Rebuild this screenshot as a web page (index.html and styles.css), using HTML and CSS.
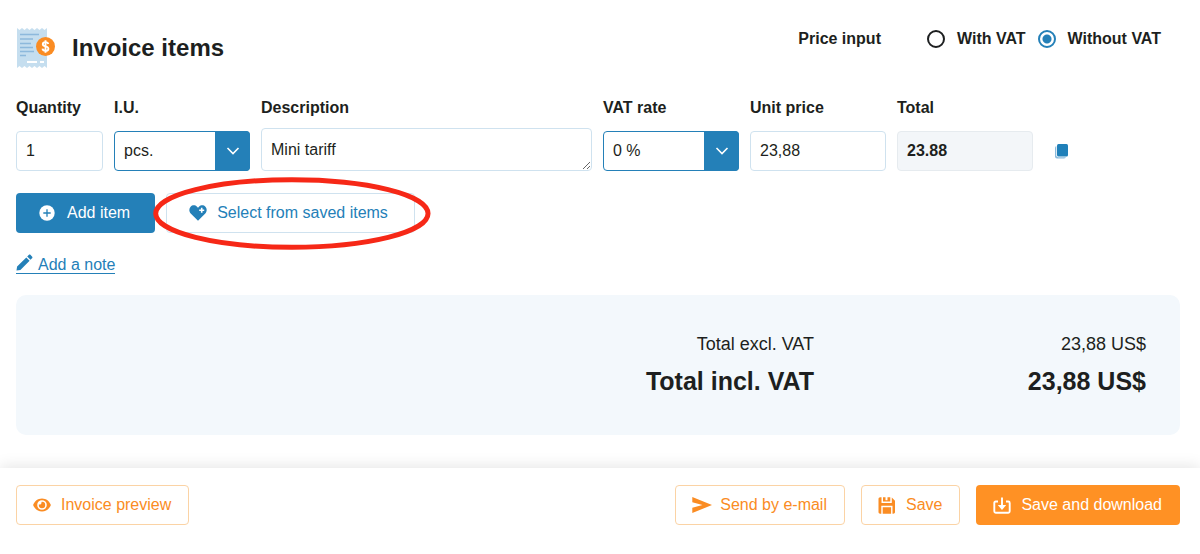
FILE: index.html
```html
<!DOCTYPE html>
<html lang="en">
<head>
<meta charset="utf-8">
<meta name="viewport" content="width=device-width, initial-scale=1">
<title>Invoice items</title>
<link rel="stylesheet" href="styles.css">
</head>
<body>
<form class="page">
  <main class="content">
    <header class="head">
      <svg class="head-icon" width="40" height="42" viewBox="0 0 40 42" aria-hidden="true">
        <path fill="#c5deef" d="M1 1l2.500 2 2.500-2 2.500 2 2.500-2 2.500 2 2.500-2 2.500 2 2.500-2 2.500 2 2.500-2 2.500 2 2.500-2v40l-2.500-2-2.500 2-2.500-2-2.500 2-2.500-2-2.500 2-2.500-2-2.500 2-2.500-2-2.500 2-2.500-2-2.500 2z"/>
        <path stroke="#8db9dc" stroke-width="1.600" d="M4 7.500h19M4 12h13M4 16.500h11M4 20.500h13M4 24.500h14M4 28.500h6"/>
        <path stroke="#fff" stroke-width="2" d="M11 35h10M24 35h4"/>
        <circle cx="29.500" cy="19.500" r="9.500" fill="#fa8c23"/>
        <path fill="none" stroke="#fff" stroke-width="1.900" d="M32.300 17c-.3-1.300-1.400-1.900-2.800-1.900-1.600 0-2.700.8-2.700 2.100 0 3 5.600 1.400 5.600 4.500 0 1.400-1.200 2.200-2.900 2.200s-2.800-.8-3-2.200M29.500 13.200v12.600"/>
      </svg>
      <h1 class="title">Invoice items</h1>
      <div class="price-input" role="radiogroup" aria-labelledby="price-label">
        <span class="price-label" id="price-label">Price input</span>
        <label class="radio"><input type="radio" name="vat">With VAT</label>
        <label class="radio"><input type="radio" name="vat" checked>Without VAT</label>
      </div>
    </header>

    <div class="item-row">
      <div class="field">
        <label class="label" for="qty">Quantity</label>
        <input class="input" id="qty" type="text" value="1">
      </div>
      <div class="field">
        <label class="label" for="unit">I.U.</label>
        <div class="select-box">
          <select class="select" id="unit"><option>pcs.</option></select>
          <span class="select-arrow"><svg width="14" height="8" viewBox="0 0 14 8" aria-hidden="true"><path d="M1.500 1L7 6.500 12.500 1"/></svg></span>
        </div>
      </div>
      <div class="field">
        <label class="label" for="desc">Description</label>
        <textarea class="input textarea" id="desc" rows="1">Mini tariff</textarea>
      </div>
      <div class="field">
        <label class="label" for="rate">VAT rate</label>
        <div class="select-box">
          <select class="select" id="rate"><option>0 %</option></select>
          <span class="select-arrow"><svg width="14" height="8" viewBox="0 0 14 8" aria-hidden="true"><path d="M1.500 1L7 6.500 12.500 1"/></svg></span>
        </div>
      </div>
      <div class="field">
        <label class="label" for="price">Unit price</label>
        <input class="input" id="price" type="text" value="23,88">
      </div>
      <div class="field">
        <label class="label" for="total">Total</label>
        <input class="input input-total" id="total" type="text" value="23.88" readonly>
      </div>
      <button class="copy" type="button" aria-label="Duplicate item">
        <svg width="14" height="16" viewBox="0 0 14 16" aria-hidden="true"><rect x="0" y="3" width="11" height="12.500" rx="2" fill="#8abadb"/><rect x="1.300" y=".5" width="12.200" height="13.700" rx="2" fill="#fff"/><rect x="2" y="1" width="11" height="12.500" rx="1.500" fill="#2080b9"/></svg>
      </button>
    </div>

    <div class="actions">
      <button class="btn btn-blue" type="button">
        <svg width="16" height="16" viewBox="0 0 16 16" aria-hidden="true"><circle cx="8" cy="8" r="7.700" fill="#fff"/><path stroke="#2480b8" stroke-width="1.300" d="M8 4.300v7.400M4.300 8h7.400"/></svg>
        Add item
      </button>
      <div class="highlighted">
        <button class="btn btn-light" type="button">
          <svg width="18" height="16" viewBox="0 0 18 16" aria-hidden="true"><path fill="#2480b8" d="M9 15.700L1.700 8.400C-.1 6.500-.1 3.500 1.600 1.700 3.300-.1 6.200-.1 8 1.700l1 1 1-1c1.800-1.800 4.700-1.800 6.400 0 1.700 1.800 1.700 4.800-.1 6.700z"/><path stroke="#fff" stroke-width="1.600" d="M12.700 2.800v5M10.200 5.300h5"/></svg>
          Select from saved items
        </button>
        <svg class="ring" viewBox="0 0 278 73" preserveAspectRatio="none" aria-hidden="true"><ellipse cx="139" cy="36.500" rx="136.300" ry="33.800"/></svg>
      </div>
    </div>

    <a class="note" href="#note"><svg width="17" height="17" viewBox="0 0 17 17" aria-hidden="true"><path fill="#2480b8" d="M.5 16.500l.6-3.900L10.300 3.400l3.300 3.300-9.200 9.200zM11.200 2.500l1.500-1.500c.6-.6 1.300-.6 1.900 0L16 2.400c.6.600.6 1.300 0 1.900l-1.500 1.500z"/></svg><span class="note-text">Add a note</span></a>

    <dl class="totals">
      <dt>Total excl. VAT</dt><dd>23,88 US$</dd>
      <dt class="grand">Total incl. VAT</dt><dd class="grand">23,88 US$</dd>
    </dl>
  </main>

  <footer class="footer">
    <button class="btn btn-outline preview" type="button">
      <svg width="18" height="14" viewBox="0 0 18 14" aria-hidden="true"><path fill="#fa8c23" fill-rule="evenodd" d="M9 .5c4.300 0 7.400 2.800 8.900 6.500C16.400 10.700 13.300 13.500 9 13.500S1.600 10.700.1 7C1.600 3.300 4.700.5 9 .5zM9 2.200a4.800 4.800 0 1 0 0 9.600 4.800 4.800 0 0 0 0-9.600z"/><path fill="#fa8c23" d="M9 3.800a3.200 3.200 0 1 1-3.200 3.200c0-.2 0-.4.100-.6A1.900 1.900 0 0 0 8.400 3.900z"/></svg>
      Invoice preview
    </button>
    <button class="btn btn-outline btn-send" type="button">
      <svg width="20" height="16" viewBox="0 0 20 16" aria-hidden="true"><path fill="#fa8c23" d="M.3 0L20 8 .3 16V10.700L10.500 8 .3 5.300z"/></svg>
      Send by e-mail
    </button>
    <button class="btn btn-outline" type="button">
      <svg width="18" height="17" viewBox="0 0 18 17" aria-hidden="true"><path fill="#fa8c23" d="M.5 2C.5 1 1.200.3 2.200.3H3.500V6h10.300V.6L17 3.800V15c0 1-.7 1.700-1.700 1.700h-.8V8.800H3.300v7.900H2.200C1.200 16.700.5 16 .5 15zM5 .3h2.500v3h2V.3h2.800v4.300H5zM4.700 10.200h8.400v6.500H4.700z"/></svg>
      Save
    </button>
    <button class="btn btn-orange" type="button">
      <svg width="18" height="17" viewBox="0 0 18 17" aria-hidden="true"><path fill="none" stroke="#fff" stroke-width="1.900" d="M5 4.500H2.700Q1.300 4.500 1.300 6v8.300q0 1.500 1.400 1.500h12.600q1.400 0 1.400-1.500V6q0-1.500-1.400-1.500H13M9 .5v9"/><path fill="#fff" d="M4.800 8L9 13l4.200-5z"/></svg>
      Save and download
    </button>
  </footer>
</form>
</body>
</html>
```
FILE: styles.css
```css
* { box-sizing: border-box; }

body {
  margin: 0;
  background: #fff;
  color: #1d1f20;
  font-family: "Liberation Sans", Arial, sans-serif;
  font-size: 16px;
  line-height: 20px;
}

button, input, select, textarea { font: inherit; color: inherit; }

svg { flex: none; }

.page {
  min-height: 100vh;
  display: flex;
  flex-direction: column;
}

.content {
  flex: 1;
  padding: 27px 20px 33px 16px;
}

.head {
  display: flex;
  align-items: flex-start;
}

.title {
  flex: 1;
  margin: 0 0 0 16px;
  font-size: 24px;
  line-height: 42px;
}

.price-input {
  display: flex;
  align-items: center;
  gap: 12px;
  margin: 2px 19px 0 0;
  font-weight: bold;
}

.price-label { margin-right: 34px; }

.radio {
  display: flex;
  align-items: center;
  gap: 12px;
}

.radio input {
  appearance: none;
  width: 18px;
  height: 18px;
  margin: 0;
  border: 2px solid #1d1f20;
  border-radius: 50%;
}

.radio input:checked {
  border-color: #2480b8;
  background: radial-gradient(circle, #2480b8 4px, #fff 5px);
}

.item-row {
  display: grid;
  grid-template-columns: 87px 136px minmax(120px, 1fr) repeat(4, 136px);
  column-gap: 11px;
  align-items: stretch;
  margin-top: 29px;
}

.field {
  display: flex;
  flex-direction: column;
  justify-content: space-between;
  min-width: 0;
}

.label { font-weight: bold; }

.input {
  width: 100%;
  height: 40px;
  padding: 0 9px;
  border: 1px solid #cfe2ef;
  border-radius: 4px;
  background: #fff;
}

.textarea {
  display: block;
  height: 43px;
  margin-top: 10px;
  padding: 11px 9px 0;
  overflow: hidden;
  resize: vertical;
}

.input-total {
  border-color: #e6ebef;
  background: #f3f6f9;
  font-weight: bold;
}

.select-box { display: grid; }

.select {
  grid-area: 1 / 1;
  appearance: none;
  width: 100%;
  height: 40px;
  padding: 0 44px 0 9px;
  border: 1px solid #2480b8;
  border-radius: 4px;
  background: #fff;
}

.select-arrow {
  grid-area: 1 / 1;
  justify-self: end;
  display: grid;
  place-items: center;
  width: 35px;
  border-radius: 0 4px 4px 0;
  background: #2480b8;
  pointer-events: none;
}

.select-arrow path {
  fill: none;
  stroke: #fff;
  stroke-width: 1.6;
}

.copy {
  align-self: end;
  justify-self: start;
  display: grid;
  place-items: center;
  height: 40px;
  margin-left: 11px;
  padding: 0;
  border: 0;
  background: none;
}

.actions {
  display: flex;
  gap: 11px;
  margin-top: 22px;
}

.btn {
  display: inline-flex;
  align-items: center;
  justify-content: center;
  gap: 10px;
  height: 40px;
  padding: 0 17px 0 16px;
  border: 1px solid transparent;
  border-radius: 4px;
  background: #fff;
  white-space: nowrap;
}

.btn-blue {
  gap: 12px;
  padding: 0 24px 0 22px;
  background: #2480b8;
  color: #fff;
}

.btn-light {
  padding: 0 26px 0 22px;
  border-color: #cfe2ef;
  color: #2480b8;
}

.btn-outline {
  border-color: #fbd3a5;
  color: #fa8c23;
}

.btn-send { gap: 8px; }

.btn-orange {
  background: #ff9124;
  color: #fff;
}

.highlighted { position: relative; }

.ring {
  position: absolute;
  top: -16px;
  left: -13px;
  width: calc(100% + 29px);
  height: calc(100% + 33px);
  pointer-events: none;
}

.ring ellipse {
  fill: none;
  stroke: #f62817;
  stroke-width: 5;
}

.note {
  display: flex;
  align-items: flex-start;
  gap: 5px;
  width: fit-content;
  margin-top: 21px;
  border-bottom: 1px solid #2480b8;
  color: #2480b8;
  line-height: 16px;
  text-decoration: none;
}

.note-text { padding-top: 3px; }

.totals {
  display: grid;
  grid-template-columns: 1fr 332px;
  row-gap: 10px;
  margin: 21px 0 0;
  padding: 39px 34px 37px;
  border-radius: 10px;
  background: #f3f8fc;
  text-align: right;
  font-size: 18px;
}

.totals dd { margin: 0; }

.totals .grand {
  font-size: 25px;
  font-weight: bold;
  line-height: 34px;
}

.footer {
  display: flex;
  flex-wrap: wrap;
  gap: 16px;
  padding: 17px 20px 29px 16px;
  background: #fff;
  box-shadow: 0 -2px 14px rgba(0, 0, 0, 0.1);
}

.preview { margin-right: auto; }
```
